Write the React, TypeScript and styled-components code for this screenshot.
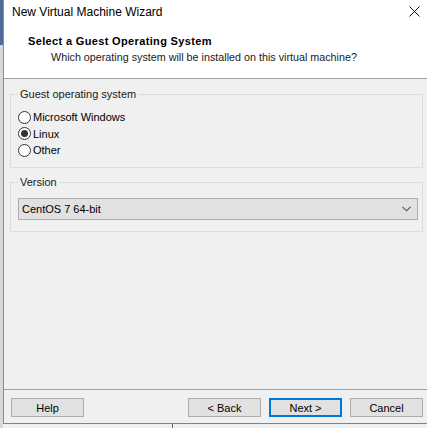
import React from 'react';
import styled, { createGlobalStyle } from 'styled-components';

const GlobalStyle = createGlobalStyle`
  html, body {
    margin: 0;
    padding: 0;
    background: #f0f0f0;
  }
  body {
    font-family: Tahoma, "Liberation Sans", Arial, sans-serif;
    font-size: 11px;
    color: #000;
  }
`;

const Screen = styled.div`
  display: flex;
  width: 427px;
  height: 428px;
  overflow: hidden;
`;

const DesktopEdge = styled.div`
  flex: 0 0 3px;
  background: linear-gradient(to bottom, #4b6a97 0, #4b6a97 45px, #d5d9de 45px);
`;

const Column = styled.div`
  flex: 1;
  display: flex;
  flex-direction: column;
  min-width: 0;
`;

const Window = styled.div`
  display: flex;
  flex-direction: column;
  height: 424px;
  box-sizing: border-box;
  border-left: 1px solid #8c8c8c;
  border-bottom: 1px solid #828282;
  background: #f0f0f0;
`;

const Header = styled.header`
  flex: 0 0 79px;
  box-sizing: border-box;
  background: #fff;
  border-bottom: 1px solid #a0a0a0;
  display: flex;
  flex-direction: column;
`;

const TitleBar = styled.div`
  height: 24px;
  display: flex;
  align-items: center;
  justify-content: space-between;
  padding: 0 7px 0 8px;
`;

const WindowTitle = styled.span`
  font-family: "Liberation Sans", Arial, sans-serif;
  font-size: 12px;
  color: #000;
`;

const CloseIcon = styled.svg`
  display: block;
  margin-top: -2px;
`;

const Heading = styled.h1`
  margin: 10px 0 0 24px;
  font-size: 11px;
  line-height: 14px;
  font-weight: bold;
  letter-spacing: 0.35px;
  font-family: Tahoma, "Liberation Sans", Arial, sans-serif;
`;

const SubHeading = styled.p`
  margin: 2px 0 0 47px;
  font-size: 10.75px;
  line-height: 14px;
  color: #1a1a1a;
`;

const Body = styled.main`
  flex: 1;
  display: flex;
  flex-direction: column;
  gap: 8px;
  padding: 9px 4px 0 6px;
`;

const GroupBox = styled.fieldset<{ $bottom: number }>`
  margin: 0;
  padding: 0 4px ${({ $bottom }) => $bottom}px 7px;
  border: 1px solid #dcdcdc;
  min-width: 0;
`;

const GroupLabel = styled.legend`
  padding: 0 2px;
  margin-left: 0;
  font-size: 11px;
  line-height: 13px;
  color: #1a1a1a;
`;

const RadioList = styled.div`
  display: flex;
  flex-direction: column;
  padding-top: 8px;
`;

const RadioRow = styled.label`
  display: flex;
  align-items: center;
  gap: 2px;
  height: 16.5px;
`;

const RadioCircle = styled.span<{ $checked?: boolean }>`
  width: 13px;
  height: 13px;
  box-sizing: border-box;
  border: 1px solid #333;
  border-radius: 50%;
  background: #fff;
  display: flex;
  align-items: center;
  justify-content: center;

  &::after {
    content: '';
    width: 7px;
    height: 7px;
    border-radius: 50%;
    background: ${({ $checked }) => ($checked ? '#333' : 'transparent')};
  }
`;

const Select = styled.div`
  margin-top: 9px;
  height: 22px;
  box-sizing: border-box;
  border: 1px solid #adadad;
  background: #e1e1e1;
  display: flex;
  align-items: center;
  justify-content: space-between;
  padding: 0 6px 0 3px;
`;

const Footer = styled.footer`
  flex: 0 0 34px;
  box-sizing: border-box;
  border-top: 1px solid #a0a0a0;
  display: flex;
  align-items: flex-start;
  padding: 8px 4px 0 7px;
`;

const Spacer = styled.div`
  flex: 1;
`;

const Button = styled.button<{ $primary?: boolean; $gap?: number }>`
  width: 73px;
  height: 19px;
  box-sizing: border-box;
  margin-left: ${({ $gap }) => $gap || 0}px;
  padding: 0;
  font-family: Tahoma, "Liberation Sans", Arial, sans-serif;
  font-size: 11px;
  color: #000;
  background: #e1e1e1;
  border: ${({ $primary }) => ($primary ? '2px solid #0078d7' : '1px solid #adadad')};
  display: flex;
  align-items: center;
  justify-content: center;
`;

const BottomEdge = styled.div`
  flex: 1;
  display: flex;
  background: #f0f0f0;
`;

const BottomEdgeLeft = styled.div`
  width: 169px;
  border-right: 1px solid #646464;
`;

const Chevron = () => (
  <svg width="9" height="6" viewBox="0 0 9 6">
    <path d="M0.5 0.8 L4.5 4.8 L8.5 0.8" fill="none" stroke="#505050" strokeWidth="1.1" />
  </svg>
);

const osOptions = [
  { label: 'Microsoft Windows', checked: false },
  { label: 'Linux', checked: true },
  { label: 'Other', checked: false },
];

export default function App() {
  return (
    <>
      <GlobalStyle />
      <Screen>
        <DesktopEdge />
        <Column>
          <Window>
            <Header>
              <TitleBar>
                <WindowTitle>{'New Virtual Machine Wizard'}</WindowTitle>
                <CloseIcon width="11" height="11" viewBox="0 0 11 11">
                  <path d="M0.5 0.5 L10.5 10.5 M10.5 0.5 L0.5 10.5" stroke="#111" strokeWidth="1" />
                </CloseIcon>
              </TitleBar>
              <Heading>{'Select a Guest Operating System'}</Heading>
              <SubHeading>{'Which operating system will be installed on this virtual machine?'}</SubHeading>
            </Header>
            <Body>
              <GroupBox $bottom={8}>
                <GroupLabel>{'Guest operating system'}</GroupLabel>
                <RadioList>
                  {osOptions.map((o) => (
                    <RadioRow key={o.label}>
                      <RadioCircle $checked={o.checked} />
                      {o.label}
                    </RadioRow>
                  ))}
                </RadioList>
              </GroupBox>
              <GroupBox $bottom={11}>
                <GroupLabel>{'Version'}</GroupLabel>
                <Select>
                  <span>{'CentOS 7 64-bit'}</span>
                  <Chevron />
                </Select>
              </GroupBox>
            </Body>
            <Footer>
              <Button>{'Help'}</Button>
              <Spacer />
              <Button>{'< Back'}</Button>
              <Button $primary $gap={8}>{'Next >'}</Button>
              <Button $gap={8}>{'Cancel'}</Button>
            </Footer>
          </Window>
          <BottomEdge>
            <BottomEdgeLeft />
          </BottomEdge>
        </Column>
      </Screen>
    </>
  );
}
